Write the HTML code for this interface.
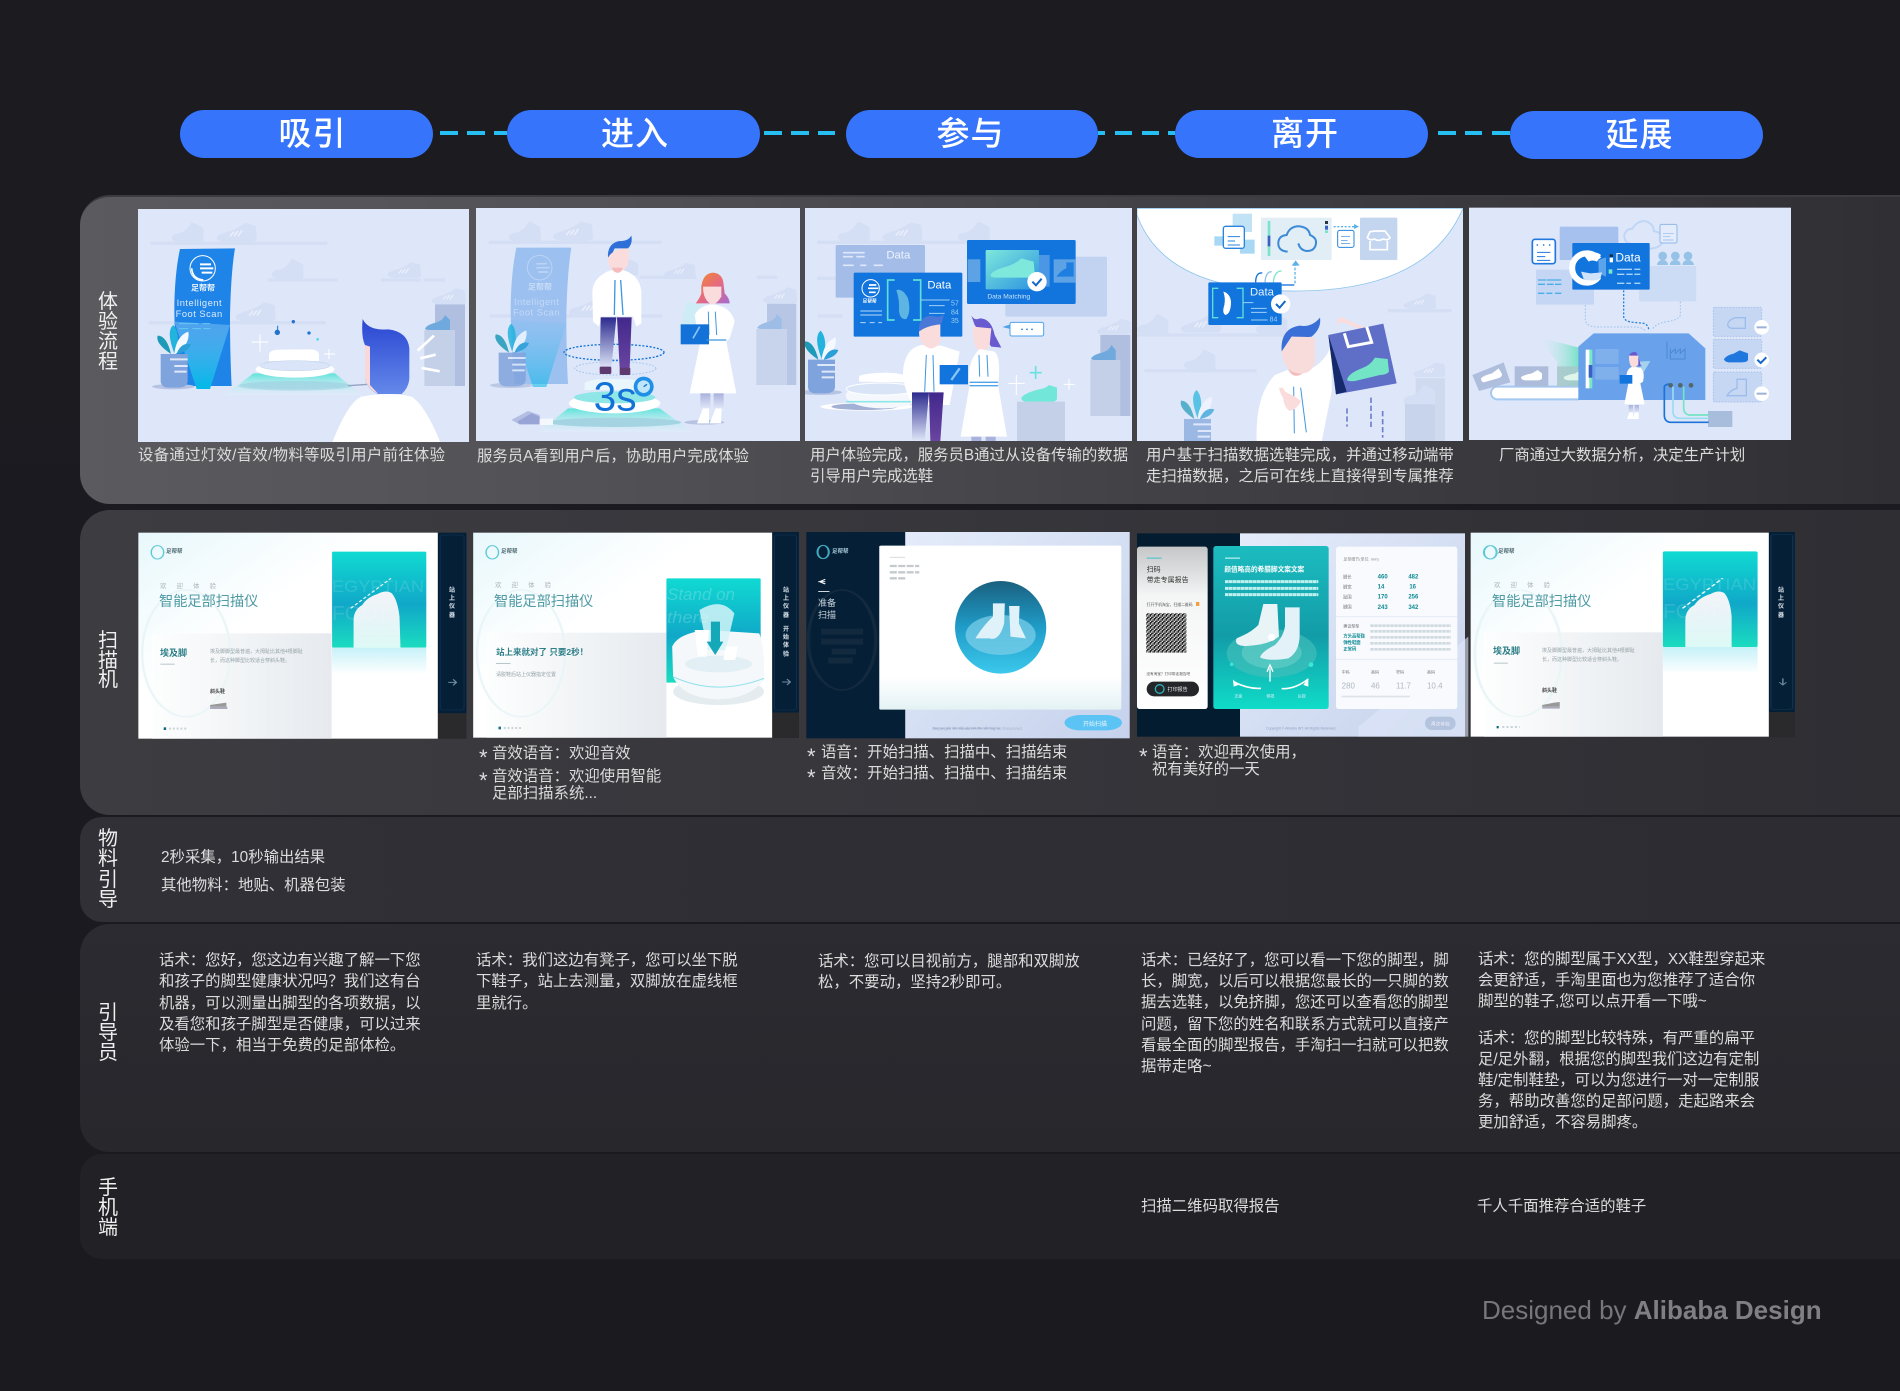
<!DOCTYPE html>
<html lang="zh"><head><meta charset="utf-8"><title>体验流程</title>
<style>
html,body{margin:0;padding:0;background:#1a1a1f}
body{position:relative;width:1900px;height:1391px;overflow:hidden;font-family:"Liberation Sans","Noto Sans CJK SC",sans-serif;background:linear-gradient(180deg,#1b1b20 0,#1a1a1f 100%)}
.r{position:absolute;left:80px;right:0;border-radius:30px 0 0 30px}
.t{position:absolute;white-space:nowrap;font-size:15.4px;line-height:21px;height:21px;color:#dcdcdc}
.s{position:absolute;font-size:22px;line-height:21px;color:#dcdcdc}
.l{position:absolute;left:96px;width:24px;text-align:center;font-size:20px;line-height:20px;color:#f0f0f0;height:20px}
.pill{position:absolute;height:48px;border-radius:24px;background:#3574fb;color:#fff;text-align:center;font-size:33px;line-height:47px;font-weight:500;letter-spacing:1px;box-sizing:border-box}
.d{position:absolute;height:4px;top:131px;background:#26bdf0}
svg.art{position:absolute;left:0;top:0}
</style></head><body>

<div class="r" style="top:195px;height:309px;background:linear-gradient(90deg,#5b5b5f 0,#515155 30%,#3f3f43 65%,#303034 100%);border-top:2px solid #3c3c40;box-sizing:border-box"></div>
<div class="r" style="top:510px;height:305px;background:linear-gradient(90deg,#3c3c41 0,#37373c 40%,#2e2e33 100%)"></div>
<div class="r" style="top:817px;height:105px;border-radius:22px 0 0 22px;background:linear-gradient(90deg,#303036 0,#2c2c32 100%)"></div>
<div class="r" style="top:924px;height:228px;background:linear-gradient(180deg,#2b2b31 0,#27272c 100%)"></div>
<div class="r" style="top:1154px;height:105px;border-radius:22px 0 0 22px;background:#212126"></div>

<div class="pill" style="left:180px;top:110px;width:253px;padding-left:12px">吸引</div>
<div class="pill" style="left:507px;top:110px;width:253px;padding-left:3px">进入</div>
<div class="pill" style="left:846px;top:110px;width:252px;padding-right:3px">参与</div>
<div class="pill" style="left:1175px;top:110px;width:253px;padding-left:7px">离开</div>
<div class="pill" style="left:1510px;top:111px;width:253px;padding-left:6px">延展</div>

<div class="d" style="left:440px;width:18px"></div><div class="d" style="left:467px;width:18px"></div><div class="d" style="left:494px;width:13px"></div>
<div class="d" style="left:764px;width:18px"></div><div class="d" style="left:791px;width:18px"></div><div class="d" style="left:818px;width:17px"></div>
<div class="d" style="left:1098px;width:7px"></div><div class="d" style="left:1115px;width:17px"></div><div class="d" style="left:1142px;width:17px"></div><div class="d" style="left:1168px;width:7px"></div>
<div class="d" style="left:1438px;width:18px"></div><div class="d" style="left:1465px;width:17px"></div><div class="d" style="left:1492px;width:18px"></div>

<svg class="art" width="1900" height="1391" viewBox="0 0 1900 1391" xmlns="http://www.w3.org/2000/svg" font-family="'Liberation Sans','Noto Sans CJK SC',sans-serif">
<defs>
<linearGradient id="beam" x1="0" y1="0" x2="0" y2="1"><stop offset="0" stop-color="#5fe3da"/><stop offset="1" stop-color="#dff3fa" stop-opacity=".2"/></linearGradient>
<linearGradient id="cone" x1="0" y1="0" x2="0" y2="1"><stop offset="0" stop-color="#7fc0f2" stop-opacity=".5"/><stop offset="1" stop-color="#00b8e8"/></linearGradient>
<linearGradient id="hairB" x1="0" y1="0" x2="0" y2="1"><stop offset="0" stop-color="#2a46d2"/><stop offset="1" stop-color="#6488ea"/></linearGradient>
<linearGradient id="pL" x1="0" y1="0" x2="0" y2="1"><stop offset="0" stop-color="#2b2a8e"/><stop offset="1" stop-color="#dfe6f8"/></linearGradient>
<linearGradient id="pR" x1="0" y1="0" x2="0" y2="1"><stop offset="0" stop-color="#41288c"/><stop offset="1" stop-color="#6a44a0"/></linearGradient>
<linearGradient id="hairW" x1="0" y1="0" x2="1" y2="1"><stop offset="0" stop-color="#f08a2c"/><stop offset=".5" stop-color="#e86a7c"/><stop offset="1" stop-color="#a56ad0"/></linearGradient>
<linearGradient id="leg" x1="0" y1="0" x2="0" y2="1"><stop offset="0" stop-color="#a9b2dc"/><stop offset="1" stop-color="#e6ebfa"/></linearGradient>
<linearGradient id="teal" x1="0" y1="0" x2="0" y2="1"><stop offset="0" stop-color="#10dad2"/><stop offset=".55" stop-color="#10a8c8"/><stop offset="1" stop-color="#1adcc0"/></linearGradient>
<linearGradient id="tealc" x1="0" y1="0" x2="0" y2="1"><stop offset="0" stop-color="#1cbcc0"/><stop offset=".55" stop-color="#129ca8"/><stop offset="1" stop-color="#10dcc8"/></linearGradient>
<linearGradient id="fade" x1="0" y1="0" x2="0" y2="1"><stop offset="0" stop-color="#c6f1f8"/><stop offset="1" stop-color="#fff"/></linearGradient>
<linearGradient id="pageW" x1="0" y1="0" x2="1" y2="1"><stop offset="0" stop-color="#e8f8fc"/><stop offset=".4" stop-color="#fff"/><stop offset="1" stop-color="#fff"/></linearGradient>
<linearGradient id="grayP" x1="0" y1="0" x2="1" y2="0"><stop offset="0" stop-color="#fdfefe"/><stop offset="1" stop-color="#e6eaee"/></linearGradient>
<linearGradient id="footG" x1="0" y1="0" x2="0" y2="1"><stop offset="0" stop-color="#f2f4f8"/><stop offset="1" stop-color="#fff" stop-opacity=".85"/></linearGradient>
<linearGradient id="circ" x1="0" y1="0" x2="0" y2="1"><stop offset="0" stop-color="#1a607f"/><stop offset=".5" stop-color="#1f9cc8"/><stop offset="1" stop-color="#3cc8ec"/></linearGradient>
<linearGradient id="scr3" x1="0" y1="0" x2="1" y2="1"><stop offset="0" stop-color="#e4ecfa"/><stop offset="1" stop-color="#c6d2ec"/></linearGradient>
<linearGradient id="qrc" x1="0" y1="0" x2="0" y2="1"><stop offset="0" stop-color="#c4c6c8"/><stop offset=".3" stop-color="#f4f5f5"/><stop offset="1" stop-color="#fff"/></linearGradient>
<linearGradient id="green" x1="1" y1="0" x2="0" y2="0"><stop offset="0" stop-color="#78e2c8"/><stop offset="1" stop-color="#dfe8f9" stop-opacity="0"/></linearGradient>
<linearGradient id="shoeT" x1="0" y1="0" x2="1" y2="1"><stop offset="0" stop-color="#7ee8dc"/><stop offset="1" stop-color="#2a92e0"/></linearGradient>
<linearGradient id="cardB" x1="0" y1="0" x2="0" y2="1"><stop offset="0" stop-color="#fff"/><stop offset=".8" stop-color="#fff"/><stop offset="1" stop-color="#e4f2f4"/></linearGradient>
<pattern id="qr" width="12" height="12" patternUnits="userSpaceOnUse"><rect width="12" height="12" fill="#e8e8e8"/><rect width="4" height="4" fill="#333"/><rect x="8" width="4" height="8" fill="#222"/><rect x="4" y="4" width="4" height="4" fill="#444"/><rect y="8" width="8" height="4" fill="#333"/></pattern>
<g id="boot"><path d="M0 48Q2 36 25 34Q45 28 60 2Q75 6 95 20L95 60L15 60Q0 58 0 48Z"/></g>
<g id="sneak"><path d="M0 45Q5 35 35 28Q65 18 85 2L117 10L120 50Q119 58 105 58L20 58Q0 56 0 45Z"/><path d="M40 42L52 28M52 42L64 26M64 42L76 24" stroke="#e8eefb" stroke-width="5" fill="none"/></g>
<g id="plant">
<ellipse cx="115" cy="545" rx="64" ry="8" fill="#b6c3e3"/>
<path d="M77 447L158 447L158 530Q155 548 130 548L100 548Q80 548 77 530Z" fill="#7fa3dc"/>
<path d="M105 463H158M118 483H158M118 500H155" stroke="#dfe8f9" stroke-width="6"/>
<path d="M108 447Q60 415 68 392Q95 392 108 447Z" fill="#1d9ab8"/>
<path d="M118 445Q92 378 115 360Q136 382 125 445Z" fill="#22b4dd"/>
<path d="M118 445Q125 392 160 380Q166 412 130 445Z" fill="#f4f8ff"/>
<path d="M125 445Q140 410 168 418Q160 440 125 447Z" fill="#2a9fd8"/>
</g>
<clipPath id="c1"><rect x="9" y="12" width="993" height="699"/></clipPath>
<clipPath id="c2"><rect x="9" y="9" width="972" height="699"/></clipPath>
<clipPath id="c3"><rect x="6" y="9" width="981" height="699"/></clipPath>
<clipPath id="c4"><rect x="6" y="9" width="978" height="699"/></clipPath>
</defs>

<!-- I1 -->
<g transform="translate(135 205) scale(.33333)">
<rect x="9" y="12" width="993" height="699" fill="#dee7f9"/>
<g clip-path="url(#c1)" fill="#d4def4">
<rect x="47" y="110" width="530" height="10"/><use href="#boot" transform="translate(110 50)"/><use href="#sneak" transform="translate(245 52)"/>
<rect x="398" y="220" width="210" height="10"/><use href="#boot" transform="translate(410 160)"/>
<rect x="738" y="220" width="120" height="10"/><rect x="866" y="220" width="64" height="10"/><use href="#sneak" transform="translate(758 170) scale(.83)"/>
<rect x="42" y="348" width="530" height="10"/><use href="#sneak" transform="translate(302 290)"/>
<use href="#sneak" transform="translate(890 248) scale(.85)"/>
<rect x="900" y="298" width="90" height="245" fill="#b0bfe0"/><rect x="868" y="375" width="92" height="168" fill="#c4d0e8"/>
<path d="M870 370Q878 358 905 352Q925 345 930 330L945 345V375H885Q870 375 870 370Z" fill="#6fa9dd"/>
<path d="M135 132L300 130Q288 200 285 330Q285 450 290 543H130Q118 400 118 300Q120 200 135 132Z" fill="#1f84e8"/>
<path d="M118 350L285 360L225 552H185Z" fill="url(#cone)"/>
<circle cx="203" cy="190" r="38" fill="none" stroke="#fff" stroke-width="3"/>
<path d="M195 178H228M195 190H235M200 203H232" stroke="#fff" stroke-width="6" fill="none"/>
<path d="M170 190Q172 222 205 225" stroke="#fff" stroke-width="5" fill="none"/>
<text x="168" y="257" font-size="24" font-weight="700" fill="#e9f3ff">足帮帮</text>
<text x="125" y="303" font-size="28" fill="#dcebfb" letter-spacing="1.5">Intelligent</text>
<text x="122" y="336" font-size="28" fill="#dcebfb" letter-spacing="1.5">Foot Scan</text>
<path d="M132 356H190M202 356H226M132 371H160M172 371H198M205 371H226" stroke="#66c8f2" stroke-width="3"/>
<use href="#plant"/>
<ellipse cx="480" cy="543" rx="170" ry="14" fill="#a9cfe4"/>
<path d="M355 505L600 505L680 570L270 570Z" fill="url(#beam)"/>
<ellipse cx="480" cy="540" rx="165" ry="12" fill="#a4d4e2" opacity=".7"/>
<path d="M402 468V450Q402 436 430 434L530 433Q552 436 552 450V468Z" fill="#fff"/>
<ellipse cx="480" cy="493" rx="118" ry="25" fill="#fff"/><ellipse cx="480" cy="482" rx="105" ry="15" fill="#dbe5f9" stroke="#c5d5ec" stroke-width="2"/>
<path d="M640 542L700 538" stroke="#94a2c4" stroke-width="4"/>
<path d="M375 388V440M350 411H400M582 432V462M567 447H600" stroke="#fff" stroke-width="3"/>
<path d="M428 362V380" stroke="#1f72cf" stroke-width="3"/><circle cx="427" cy="382" r="8" fill="#1f72cf"/><circle cx="475" cy="350" r="5" fill="#1f72cf"/><circle cx="522" cy="384" r="5" fill="#1f72cf"/>
<circle cx="548" cy="403" r="4" fill="#4fd8e8"/>
<path d="M683 342Q678 395 690 420V520Q695 550 728 567H800Q825 545 823 510V430Q818 380 760 373Q700 378 683 342Z" fill="url(#hairB)"/>
<path d="M690 420L705 425V540L730 567Q695 550 690 520Z" fill="#f8d8d8"/>
<path d="M592 712Q640 590 680 575Q760 560 830 575Q870 600 916 712Z" fill="#fff"/>
<path d="M848 437L897 392M856 460L902 449M860 489L914 499" stroke="#fff" stroke-width="8"/>
</g></g>

<!-- I2 -->
<g transform="translate(473 205) scale(.33333)">
<rect x="9" y="9" width="972" height="699" fill="#dee7f9"/>
<g clip-path="url(#c2)" fill="#d4def4">
<rect x="47" y="107" width="518" height="10"/><use href="#boot" transform="translate(108 48)"/><use href="#sneak" transform="translate(240 48)"/>
<rect x="500" y="212" width="170" height="10"/><use href="#sneak" transform="translate(572 172) scale(.8)"/><rect x="852" y="212" width="60" height="10"/>
<rect x="50" y="328" width="518" height="10"/><use href="#sneak" transform="translate(287 275)"/>
<use href="#boot" transform="translate(415 160) scale(.85)"/>
<use href="#sneak" transform="translate(870 245) scale(.85)"/>
<rect x="882" y="296" width="88" height="244" fill="#b8c6e5"/><rect x="850" y="372" width="92" height="168" fill="#c8d4eb"/>
<path d="M853 367Q861 356 888 350Q908 343 912 327L926 342V372H868Q853 372 853 367Z" fill="#9dbce6"/>
<path d="M130 128L295 128Q283 200 280 330Q280 450 285 537H125Q113 400 113 300Q115 200 130 128Z" fill="#9cc0f0"/>
<path d="M113 345L280 355L220 546H180Z" fill="url(#cone)" opacity=".55"/>
<circle cx="200" cy="188" r="37" fill="none" stroke="#bcd4f4" stroke-width="3"/>
<path d="M190 176H222M190 188H230M196 201H226" stroke="#bcd4f4" stroke-width="5" fill="none"/>
<text x="165" y="254" font-size="24" font-weight="700" fill="#c8dcf6">足帮帮</text>
<text x="123" y="300" font-size="28" fill="#c4d9f6" letter-spacing="1.5">Intelligent</text>
<text x="120" y="332" font-size="28" fill="#c4d9f6" letter-spacing="1.5">Foot Scan</text>
<use href="#plant" transform="translate(0 -4)" opacity=".85"/>
<path d="M285 610L560 610L660 682L195 682Z" fill="url(#beam)"/>
<ellipse cx="425" cy="652" rx="200" ry="14" fill="#a4d4e2"/>
<path d="M335 555V535Q340 522 425 522Q505 522 510 535V555Z" fill="#e9f6fb"/>
<ellipse cx="425" cy="595" rx="137" ry="30" fill="#fff"/><ellipse cx="425" cy="577" rx="122" ry="18" fill="#8fe6e6"/>
<ellipse cx="423" cy="442" rx="150" ry="24" fill="none" stroke="#1372d8" stroke-width="4" stroke-dasharray="6 5"/>
<ellipse cx="427" cy="490" rx="122" ry="20" fill="none" stroke="#a1c6ee" stroke-width="3" stroke-dasharray="5 5"/>
<path d="M358 260Q360 215 415 195L450 195Q500 210 505 260V355L490 365L480 335H385L378 365L360 350Z" fill="#fff"/>
<path d="M426 225L424 330M443 225L450 330" stroke="#3e97df" stroke-width="4"/>
<path d="M383 337H430L415 490H380Z" fill="url(#pL)"/><path d="M432 337H476L470 490H440Z" fill="url(#pR)"/>
<rect x="380" y="485" width="35" height="22" rx="4" fill="#5e3a70"/><rect x="440" y="488" width="32" height="22" rx="4" fill="#5e3a70"/>
<path d="M405 158Q402 115 440 108Q465 110 475 92Q480 115 465 130H425L412 158Z" fill="#2f6fd8"/>
<path d="M405 158Q420 130 467 130V172Q460 198 435 200Q405 195 405 165Z" fill="#fbdcdc"/>
<path d="M418 195Q435 212 448 195V188H418Z" fill="#f4bcbc"/>
<path d="M685 245Q690 205 720 203Q750 205 752 240L755 265Q770 280 770 295H668Q680 280 685 265Z" fill="url(#hairW)"/>
<path d="M690 245H745V275Q730 300 715 298Q690 285 690 245Z" fill="#fbdcdc"/>
<path d="M640 290L690 300L680 400L625 360Z" fill="#c8eef4" opacity=".7"/>
<path d="M665 330Q680 300 720 298Q775 305 785 350L770 400L760 410L790 565H650L680 420Z" fill="#fff"/>
<path d="M706 320L708 390M727 320L731 390" stroke="#3e97df" stroke-width="3"/>
<rect x="623" y="358" width="85" height="60" fill="#1372d8"/><path d="M660 400L680 365" stroke="#8ac4f4" stroke-width="5"/>
<path d="M700 405H760" stroke="#3e97df" stroke-width="4"/>
<ellipse cx="694" cy="652" rx="60" ry="7" fill="#b6c3e3"/>
<rect x="682" y="565" width="30" height="50" fill="url(#leg)"/><rect x="722" y="565" width="30" height="50" fill="url(#leg)"/>
<path d="M690 610H708V655H672Z M728 610H746L744 655H710Z" fill="#fff"/>
<path d="M115 645L165 618L200 630V655L140 658Z" fill="#b4bde2"/><path d="M133 650L175 625L200 635V658H140Z" fill="#98a4d6"/>
<path d="M200 642L240 640V660H200Z" fill="#f4f8fd"/>
<text x="362" y="617" font-size="122" fill="#1372d8" font-weight="400">3s</text>
<circle cx="512" cy="545" r="30" fill="#1f8fe8"/><circle cx="512" cy="545" r="19" fill="#bfe6f8"/><path d="M512 545L522 538" stroke="#1372d8" stroke-width="4"/>
</g></g>

<!-- I3 -->
<g transform="translate(803 205) scale(.33333)">
<rect x="6" y="9" width="981" height="699" fill="#dee7f9"/>
<g clip-path="url(#c3)" fill="#d4def4">
<rect x="42" y="107" width="450" height="10"/><use href="#boot" transform="translate(105 48)"/><use href="#sneak" transform="translate(238 50)"/><use href="#boot" transform="translate(465 48)"/>
<rect x="44" y="328" width="75" height="10"/><rect x="42" y="215" width="110" height="10"/>
<rect x="607" y="155" width="305" height="180" rx="6" fill="#c2d3f1"/>
<rect x="98" y="120" width="268" height="158" rx="4" fill="#a4bde8"/>
<path d="M120 143H185M120 155H150M160 155H185M120 181H152M172 181H190M212 181H240" stroke="#dfe8fb" stroke-width="5"/>
<text x="250" y="160" font-size="34" fill="#eef3fd">Data</text>
<rect x="152" y="203" width="326" height="192" rx="4" fill="#1274dd"/>
<circle cx="203" cy="250" r="26" fill="none" stroke="#fff" stroke-width="3"/><path d="M198 240H220M195 250H226M198 262H218" stroke="#fff" stroke-width="5"/>
<text x="179" y="293" font-size="14" font-weight="700" fill="#fff">足帮帮</text>
<path d="M172 318H237M172 330H237M172 353H188M200 353H215M226 353H237" stroke="#b9d8f8" stroke-width="3"/>
<path d="M275 225H254V345H275M330 225H353V345H330" fill="none" stroke="#5ee0d8" stroke-width="5"/>
<path d="M280 255Q300 250 315 280Q325 320 310 342Q290 345 288 315Q290 285 280 255Z" fill="#5fb5e2"/>
<path d="M353 285H440M378 302H425M378 325H425" stroke="#9fd0f4" stroke-width="3"/>
<text x="373" y="251" font-size="34" fill="#fff">Data</text>
<text x="444" y="301" font-size="21" fill="#9ed0f6">57</text><text x="444" y="328" font-size="21" fill="#9ed0f6">84</text><text x="444" y="354" font-size="21" fill="#9ed0f6">35</text>
<rect x="492" y="105" width="326" height="192" rx="4" fill="#1274dd"/>
<rect x="494" y="163" width="38" height="68" fill="#5ea2e6"/><rect x="752" y="163" width="66" height="70" fill="#5ea2e6"/>
<rect x="706" y="150" width="34" height="95" fill="#4b97e6"/>
<rect x="548" y="135" width="160" height="118" rx="3" fill="url(#shoeT)"/>
<path d="M562 210Q570 195 610 185Q640 175 655 160L692 170L695 205Q692 218 670 218H580Q562 218 562 210Z" fill="#7ee8dc"/>
<path d="M760 215Q775 195 790 190V172H812V215Z" fill="#1f7fe0"/>
<circle cx="702" cy="230" r="29" fill="#fff"/><path d="M688 230L699 241L716 221" fill="none" stroke="#1467c8" stroke-width="6"/>
<text x="553" y="281" font-size="20" fill="#c6e6fa">Data Matching</text>
<use href="#sneak" transform="translate(882 340) scale(.85)"/>
<rect x="892" y="390" width="90" height="243" fill="#b0bfe0"/><rect x="862" y="465" width="90" height="168" fill="#c4d0e8"/>
<path d="M864 460Q872 448 900 442Q920 435 925 420L938 435V465H880Q864 465 864 460Z" fill="#6fa9dd"/>
<use href="#plant" transform="translate(-62 17)"/>
<ellipse cx="190" cy="605" rx="138" ry="12" fill="#fff"/><ellipse cx="185" cy="605" rx="100" ry="10" fill="#a3b0d6"/>
<path d="M168 530V515Q175 505 250 503Q310 505 320 520V532Z" fill="#fff"/>
<ellipse cx="240" cy="572" rx="112" ry="38" fill="#f4f8fd"/><ellipse cx="235" cy="552" rx="105" ry="18" fill="#d9e4f7" stroke="#fff" stroke-width="3"/>
<path d="M130 590H340" stroke="#8de6e8" stroke-width="5"/>
<rect x="642" y="590" width="144" height="118" fill="#c4d0e8"/>
<path d="M655 578Q665 565 700 555Q730 550 738 540L762 548V582Q760 590 745 590H670Q655 590 655 578Z" fill="#72e6d8"/>
<path d="M698 483V522M680 503H716" stroke="#6ae0e0" stroke-width="5"/><path d="M640 510V570M616 535H665M798 522V555M782 538H815" stroke="#fff" stroke-width="3"/>
<path d="M300 500Q305 430 355 420L415 422L470 440L440 600H330Q300 550 300 500Z" fill="#fff"/>
<path d="M370 450L365 560M390 450L393 560" stroke="#3e97df" stroke-width="3"/>
<path d="M327 562H378L365 708H327Z" fill="url(#pL)"/><path d="M378 562H422L412 708H382Z" fill="url(#pR)"/>
<path d="M348 380Q345 335 385 332Q410 340 422 328Q420 350 412 358Q370 362 348 380Z" fill="#4a78d8"/>
<path d="M348 380Q370 362 412 358V410Q400 432 380 430Q348 420 348 380Z" fill="#fbdcdc"/>
<path d="M505 332Q515 348 530 340Q565 340 575 390L595 428L565 425L515 360Z" fill="#6a5ad0"/>
<path d="M510 365L565 370L560 420Q545 445 530 440Q508 425 510 365Z" fill="#fbdcdc"/>
<path d="M500 540Q490 470 530 432L575 440Q595 460 585 540L612 695H473Z" fill="#fff"/>
<path d="M528 450L530 515M552 450L555 515" stroke="#3e97df" stroke-width="3"/><path d="M500 532H585M500 542H585" stroke="#4fa3e8" stroke-width="4"/>
<rect x="410" y="480" width="85" height="58" fill="#1274dd"/><path d="M445 525L470 490" stroke="#8ac4f4" stroke-width="7"/>
<rect x="505" y="695" width="30" height="14" fill="#a9b2dc"/><rect x="548" y="695" width="30" height="14" fill="#a9b2dc"/>
<path d="M598 366L622 358V372Z" fill="#4da3ec"/><rect x="621" y="352" width="101" height="41" rx="5" fill="#fff" stroke="#4da3ec" stroke-width="3"/>
<circle cx="657" cy="373" r="2.5" fill="#1274dd"/><circle cx="672" cy="373" r="2.5" fill="#1274dd"/><circle cx="687" cy="373" r="2.5" fill="#1274dd"/>
</g></g>

<!-- I4 -->
<g transform="translate(1135 205) scale(.33333)">
<rect x="6" y="9" width="978" height="699" fill="#dee7f9"/>
<g clip-path="url(#c4)" fill="#d4def4">
<path d="M6 30Q90 262 490 258Q880 255 984 10H6Z" fill="#fff" stroke="#8cc4ec" stroke-width="2.5"/>
<rect x="293" y="26" width="58" height="55" fill="#c2e2f6"/><rect x="238" y="94" width="30" height="28" fill="#a8d8f4"/><rect x="315" y="104" width="44" height="42" fill="#a8d8f4"/>
<rect x="265" y="64" width="63" height="66" rx="7" fill="#fff" stroke="#2a84dd" stroke-width="4"/>
<path d="M278 95H315M278 108H300M278 120H315" stroke="#2a84dd" stroke-width="3"/>
<rect x="378" y="38" width="212" height="127" fill="#e2eef6"/>
<rect x="398" y="48" width="8" height="105" fill="#7ae4ca"/><rect x="398" y="92" width="8" height="32" fill="#3a5fc6"/>
<rect x="570" y="48" width="9" height="9" fill="#2b3342"/><rect x="570" y="62" width="9" height="12" fill="#3a5fc6"/><rect x="570" y="76" width="9" height="8" fill="#7ae4ca"/>
<path d="M458 140Q428 138 430 112Q432 92 455 90Q465 62 495 64Q522 68 525 90Q545 98 543 115Q540 138 515 138Q495 135 490 115" fill="none" stroke="#3a8ad8" stroke-width="6"/>
<path d="M596 65H665" stroke="#5bb2ea" stroke-width="4" stroke-dasharray="6 5"/><path d="M657 57L672 65L657 72Z" fill="#5bb2ea"/>
<rect x="608" y="76" width="49" height="51" rx="6" fill="#fff" stroke="#2a84dd" stroke-width="3"/><path d="M618 95H645M618 106H638M618 116H645" stroke="#2a84dd" stroke-width="2"/>
<rect x="675" y="38" width="112" height="127" rx="3" fill="#c4d5ef"/>
<path d="M705 80L720 78H750L765 98Q760 108 745 102Q730 110 718 102Q705 108 697 98ZM705 108V134H757V108" fill="none" stroke="#fff" stroke-width="5"/>
<path d="M480 235V175" stroke="#5bb2ea" stroke-width="4" stroke-dasharray="8 5"/><path d="M470 182L482 166L494 182Z" fill="#5bb2ea"/>
<path d="M440 240H478" stroke="#1274dd" stroke-width="4"/>
<path d="M362 232Q362 202 382 204" fill="none" stroke="#1274dd" stroke-width="4"/><path d="M390 232Q392 200 410 200" fill="none" stroke="#8dc2ec" stroke-width="4"/><path d="M415 232Q418 198 440 198" fill="none" stroke="#7ae4ca" stroke-width="4"/>
<rect x="8" y="385" width="500" height="10"/><use href="#boot" transform="translate(5 325)"/><use href="#sneak" transform="translate(138 325)"/><use href="#boot" transform="translate(362 325)"/>
<rect x="28" y="492" width="337" height="10"/><use href="#boot" transform="translate(146 432)"/>
<rect x="758" y="312" width="192" height="10"/><use href="#sneak" transform="translate(805 264) scale(.82)"/>
<use href="#sneak" transform="translate(835 470) scale(.8)"/>
<rect x="842" y="520" width="88" height="190" fill="#cfdaef"/><rect x="810" y="595" width="90" height="115" fill="#c8d4eb"/><use href="#boot" transform="translate(806 538)"/>
<rect x="220" y="232" width="220" height="128" rx="4" fill="#1274dd"/>
<path d="M250 250H233V338H250M305 250H324V338H305" fill="none" stroke="#5ee0d8" stroke-width="4"/>
<path d="M265 260Q285 265 288 290Q288 325 272 330Q260 325 268 300Q272 280 265 260Z" fill="#fff"/>
<path d="M324 293H355M348 310H395M348 322H395M348 345H398" stroke="#9fd0f4" stroke-width="3"/>
<text x="345" y="272" font-size="34" fill="#e6f3fe">Data</text><text x="404" y="349" font-size="21" fill="#9ed0f6">84</text>
<circle cx="437" cy="297" r="29" fill="#fff"/><path d="M423 297L434 308L451 288" fill="none" stroke="#1467c8" stroke-width="6"/>
<use href="#plant" transform="translate(70 195)" opacity=".7"/>
<path d="M636 610V665M708 578V672M743 618V698" stroke="#6f7fd0" stroke-width="5" stroke-dasharray="16 8"/>
<path d="M365 710Q360 570 420 510L470 490L530 490Q570 470 590 420V560L560 710Z" fill="#fff"/>
<path d="M476 545L478 685M497 548L514 682" stroke="#3e97df" stroke-width="3"/>
<path d="M460 495Q480 530 515 495V470H460Z" fill="#f4bcbc"/>
<path d="M432 548Q445 545 450 560L480 575L498 588Q485 615 462 618Q445 600 445 580Q435 565 432 548Z" fill="#fbdcdc"/>
<path d="M603 358L615 335L690 368L680 375L625 352Z" fill="#fbdcdc"/>
<path d="M580 390L745 356L785 535L603 568Z" fill="#5f6fc8"/><path d="M580 390L603 568L635 560Z" fill="#142a6a"/>
<path d="M628 385L640 425L710 412L695 365" fill="none" stroke="#fff" stroke-width="9"/>
<path d="M636 525Q640 505 680 490Q705 482 720 458L758 462L762 500Q755 510 735 510L660 528Q640 530 636 525Z" fill="#74e4c6"/>
<path d="M440 440Q435 370 495 362Q530 368 555 338Q560 370 530 395Q500 400 470 395L440 440Z" fill="#3a6fd8"/>
<path d="M440 440L470 395Q515 395 540 398V470Q530 510 490 505Q445 500 440 440Z" fill="#f8dcdc"/>
</g></g>

<!-- I5 -->
<g transform="translate(1467 205) scale(.33333)">
<rect x="6" y="8" width="966" height="697" fill="#dee7f9"/>
<rect x="278" y="65" width="176" height="100" rx="5" fill="#a7c1ee"/>
<path d="M505 118Q470 118 472 90Q478 70 495 72Q515 42 540 50Q562 60 560 78Q595 85 588 112Q570 135 540 130" fill="none" stroke="#c0d6f4" stroke-width="6"/>
<rect x="579" y="58" width="51" height="56" rx="5" fill="#e4ecfb" stroke="#8fb8ea" stroke-width="3"/><path d="M588 85H620M588 95H610M588 105H620" stroke="#8fb8ea" stroke-width="2"/>
<rect x="196" y="103" width="69" height="73" rx="8" fill="#fff" stroke="#2077dd" stroke-width="5"/>
<path d="M210 142H250M210 155H235M210 166H250" stroke="#2077dd" stroke-width="3"/><circle cx="211" cy="120" r="2.5" fill="#2077dd"/><circle cx="230" cy="120" r="2.5" fill="#2077dd"/><circle cx="248" cy="120" r="2.5" fill="#2077dd"/>
<rect x="207" y="194" width="174" height="105" rx="5" fill="#c4d6f3"/>
<path d="M213 225H238M240 225H283M213 238H234M240 238H260M264 238H283M213 265H232M238 265H256M264 265H283" stroke="#48aee8" stroke-width="4"/>
<rect x="516" y="183" width="172" height="106" rx="5" fill="#ccdcf5"/>
<g fill="#95c2e6"><circle cx="587" cy="153" r="13"/><circle cx="625" cy="153" r="13"/><circle cx="663" cy="153" r="13"/><path d="M570 180Q572 165 587 165Q602 165 603 180ZM608 180Q610 165 625 165Q640 165 641 180ZM646 180Q648 165 663 165Q678 165 681 180Z"/></g>
<rect x="316" y="114" width="232" height="140" rx="3" fill="#1274dd"/>
<path d="M395 163A44 44 0 1 0 395 215" fill="none" stroke="#fff" stroke-width="18"/>
<path d="M350 150Q385 135 402 150L390 170Q375 163 365 170Z" fill="#fff"/><path d="M394 165L417 157V215L395 205Z" fill="#5ba4ec"/><path d="M342 200L370 205L405 202L400 222Q375 232 350 222Z" fill="#cfe2fa"/>
<rect x="428" y="148" width="10" height="8" fill="#222b3c"/><rect x="428" y="158" width="10" height="14" fill="#fff"/><rect x="425" y="193" width="11" height="13" fill="#78e6c8"/>
<text x="445" y="170" font-size="36" fill="#fff">Data</text>
<path d="M450 193H495M502 193H520M450 208H472M478 208H497M502 208H520M450 235H472M478 235H492M502 235H520" stroke="#a6d3f6" stroke-width="4"/>
<path d="M470 256V335Q472 350 500 352L530 355Q545 360 545 375" fill="none" stroke="#2a84dd" stroke-width="4" stroke-dasharray="6 5"/>
<path d="M355 300V345Q358 365 390 366L500 366Q530 366 535 380" fill="none" stroke="#9cc0ee" stroke-width="3" stroke-dasharray="5 5"/>
<path d="M640 290V330Q635 345 600 350Q565 355 555 375" fill="none" stroke="#9cc0ee" stroke-width="3" stroke-dasharray="5 5"/>
<path d="M210 395L335 428V545H270V470Z" fill="url(#green)"/>
<rect x="72" y="545" width="280" height="38" rx="19" fill="#fff" stroke="#a4c8f0" stroke-width="6"/>
<path d="M16 510L110 472L130 532L36 558Z" fill="#b0bedd"/><path d="M42 520Q52 510 75 505L95 490L105 507Q105 518 92 520L50 532Q42 530 42 520Z" fill="#fff"/>
<rect x="143" y="484" width="101" height="60" fill="#adbcdb"/><path d="M162 516Q175 508 195 505L212 495L225 505V520Q222 526 210 526H175Q162 525 162 516Z" fill="#fff"/>
<rect x="270" y="484" width="68" height="60" fill="#a8c5c8" opacity=".8"/><path d="M290 516Q305 508 325 505L338 497V526H305Q290 525 290 516Z" fill="#dff5ea"/>
<path d="M380 385H665L715 430V585H334V425Z" fill="#69a2ea"/>
<rect x="356" y="434" width="12" height="116" fill="#fff"/><rect x="367" y="434" width="9" height="116" fill="#75e6c6"/><rect x="365" y="480" width="11" height="38" fill="#3a5fc6"/>
<rect x="385" y="432" width="70" height="45" rx="4" fill="#80b0ec"/><rect x="385" y="486" width="70" height="38" rx="4" fill="#80b0ec"/>
<path d="M600 410V462M610 430V462H654V432L640 445V432L625 445V432L610 445" fill="none" stroke="#4b88d4" stroke-width="3"/>
<circle cx="611" cy="541" r="7" fill="#566"/><circle cx="640" cy="541" r="7" fill="#566"/><circle cx="672" cy="541" r="7" fill="#566"/>
<rect x="723" y="618" width="73" height="48" fill="#a8bcdc"/>
<path d="M725 652H610Q592 650 592 630V545Q592 540 606 537" fill="none" stroke="#1b72d8" stroke-width="5"/>
<path d="M725 640H635Q618 638 618 620V545" fill="none" stroke="#9adcf0" stroke-width="5"/>
<path d="M725 630H665Q650 625 650 610V545" fill="none" stroke="#72e4c4" stroke-width="5"/>
<path d="M515 470L550 468L525 510Z" fill="#bfe8ee" opacity=".7"/>
<path d="M478 530Q475 490 498 485L520 488Q535 500 528 530L520 535L533 598H472L484 535Z" fill="#fff"/>
<path d="M486 452Q492 438 508 442Q518 462 520 478L525 485L490 475Z" fill="#6a5ad0"/>
<path d="M486 452H514V478Q505 490 495 486Q485 478 486 452Z" fill="#fbdcdc"/>
<rect x="458" y="510" width="38" height="26" fill="#1274dd"/>
<rect x="485" y="600" width="13" height="25" fill="url(#leg)"/><rect x="503" y="600" width="13" height="25" fill="url(#leg)"/>
<path d="M487 622H498V642H480ZM503 622H515V642H497Z" fill="#fff"/>
<g fill="#c6d7f3" stroke="#a8c2ea" stroke-width="3" stroke-dasharray="5 4"><rect x="739" y="307" width="145" height="87" rx="4"/><rect x="739" y="403" width="145" height="87" rx="4"/><rect x="739" y="501" width="145" height="90" rx="4"/></g>
<path d="M782 357Q785 345 805 338L835 338V370H795Q782 368 782 357Z" fill="none" stroke="#9cbdec" stroke-width="4"/>
<path d="M771 462Q780 450 800 446L818 436L843 445V465Q840 472 825 472H785Q771 470 771 462Z" fill="#2077dd"/>
<path d="M780 572Q790 555 810 550V523H838V572Z" fill="none" stroke="#9cbdec" stroke-width="4"/>
<circle cx="884" cy="367" r="22" fill="#fff"/><rect x="869" y="364" width="30" height="6" fill="#9cb2d8"/>
<circle cx="884" cy="465" r="22" fill="#fff"/><path d="M871 464L881 474L898 457" fill="none" stroke="#1467c8" stroke-width="6"/>
<circle cx="884" cy="566" r="22" fill="#fff"/><rect x="869" y="563" width="30" height="6" fill="#9cb2d8"/>
</g>

<!-- S1 -->
<g transform="translate(80 510) scale(.47832 .33333)">
<rect x="748" y="68" width="60" height="542" fill="#051f37"/><rect x="748" y="610" width="60" height="76" fill="#2a2a2d"/>
<rect x="753" y="75" width="50" height="525" rx="6" fill="none" stroke="#0d3150" stroke-width="2"/>
<rect x="122" y="68" width="626" height="618" fill="url(#pageW)"/>
<rect x="150" y="370" width="376" height="316" fill="url(#grayP)"/>
<ellipse cx="222" cy="430" rx="92" ry="190" fill="none" stroke="#eaf5f7" stroke-width="5"/>
<rect x="527" y="125" width="197" height="288" rx="3" fill="url(#teal)"/>
<rect x="527" y="413" width="197" height="80" fill="url(#fade)"/>
<path d="M572 413V330Q572 300 590 285Q600 262 622 252Q640 238 652 250Q664 270 668 320L670 413Z" fill="url(#footG)"/>
<path d="M566 295L650 205" stroke="#e8fafa" stroke-width="3" stroke-dasharray="8 5"/>
<rect x="175" y="652" width="5" height="8" fill="#0b6a7c"/><path d="M186 656H224" stroke="#c8d4d8" stroke-width="6" stroke-dasharray="4 4"/>
<ellipse cx="162" cy="127" rx="13" ry="20" fill="none" stroke="#5ec9d8" stroke-width="3"/>
<rect x="168" y="461" width="30" height="3" fill="#b8c6ca"/>
<path d="M272 590H308V597H272Z" fill="#aab"/><path d="M272 585L295 580L306 578V590H272Z" fill="#999"/>
<path d="M770 517H786M780 508L787 517L780 526" fill="none" stroke="#6d8ea6" stroke-width="3"/>
</g>
<!-- S2 -->
<g transform="translate(80 510) scale(.47832 .33333)">
<rect x="1447" y="66" width="56" height="542" fill="#051f37"/><rect x="1447" y="608" width="56" height="76" fill="#2a2a2d"/>
<rect x="1452" y="75" width="46" height="525" rx="6" fill="none" stroke="#0d3150" stroke-width="2"/>
<rect x="822" y="68" width="625" height="615" fill="url(#pageW)"/>
<rect x="850" y="368" width="376" height="315" fill="url(#grayP)"/>
<ellipse cx="922" cy="430" rx="92" ry="190" fill="none" stroke="#eaf5f7" stroke-width="5"/>
<rect x="1226" y="205" width="197" height="313" rx="3" fill="url(#teal)"/>
<ellipse cx="1335" cy="545" rx="95" ry="40" fill="#e4ecf0"/>
<path d="M1238 410Q1250 370 1310 360L1420 370Q1432 410 1430 510Q1400 565 1335 568Q1260 565 1240 500Z" fill="#f4f8fb"/>
<ellipse cx="1335" cy="462" rx="70" ry="25" fill="#e2eff5"/>
<path d="M1240 500Q1330 560 1430 505" fill="none" stroke="#93e2ec" stroke-width="3"/>
<path d="M1295 300L1312 420H1350L1368 310Q1340 260 1295 300Z" fill="#d4f5f8" opacity=".85"/>
<path d="M1285 360H1315L1310 440L1292 440ZM1350 410L1375 410L1370 450H1345Z" fill="#fff"/>
<path d="M1319 335H1338V395H1345L1328 435L1310 395H1319Z" fill="#14a8b8"/>
<rect x="875" y="650" width="5" height="8" fill="#0b6a7c"/><path d="M886 654H924" stroke="#c8d4d8" stroke-width="6" stroke-dasharray="4 4"/>
<ellipse cx="862" cy="127" rx="13" ry="20" fill="none" stroke="#5ec9d8" stroke-width="3"/>
<rect x="870" y="459" width="30" height="3" fill="#b8c6ca"/>
<path d="M1468 516H1484M1478 507L1485 516L1478 525" fill="none" stroke="#6d8ea6" stroke-width="3"/>
</g>
<!-- S3 -->
<g transform="translate(800 510) scale(.70153 .33333)">
<rect x="9" y="66" width="141" height="619" fill="#051f37"/>
<rect x="150" y="66" width="320" height="619" fill="url(#scr3)"/>
<ellipse cx="60" cy="390" rx="48" ry="150" fill="none" stroke="#12293e" stroke-width="5"/>
<path d="M30 365H90M30 395H90M45 425H80M40 452H75" stroke="#12293e" stroke-width="18"/>
<rect x="113" y="107" width="345" height="492" rx="3" fill="url(#cardB)"/>
<ellipse cx="286" cy="352" rx="65" ry="139" fill="url(#circ)"/>
<ellipse cx="286" cy="375" rx="50" ry="60" fill="#7fd0ea" opacity=".7"/>
<path d="M275 280H292L291 340Q284 395 270 385L250 385Q262 345 275 320ZM298 288H313L312 340L322 385L300 380Z" fill="#dff1f9"/>
<rect x="377" y="615" width="82" height="46" rx="23" fill="#5cc4f4"/>
<path d="M28 215L36 208M28 215L36 222M26 215H36" stroke="#fff" stroke-width="2.5" fill="none"/><rect x="26" y="243" width="16" height="3" fill="#cfd8e0"/>
<ellipse cx="33" cy="126" rx="8" ry="20" fill="none" stroke="#3fa8c0" stroke-width="3"/>
<path d="M128 142H150" stroke="#d5dde2" stroke-width="3"/><path d="M128 168H170M128 187H170M128 205H150" stroke="#c4cace" stroke-width="7" stroke-dasharray="10 2"/>
<path d="M190 655H285" stroke="#aab8d4" stroke-width="5" stroke-dasharray="7 2"/>
</g>
<!-- S4 -->
<g transform="translate(1135 530) scale(.33333)">
<rect x="6" y="10" width="309" height="610" fill="#041c30"/>
<rect x="315" y="10" width="675" height="610" fill="url(#scr3)"/>
<path d="M670 590L1000 320V620H670Z" fill="#dfe7f8" opacity=".6"/>
<rect x="6" y="50" width="212" height="487" rx="8" fill="url(#qrc)"/>
<rect x="35" y="82" width="45" height="5" fill="#78c8cc"/>
<text x="35" y="125" font-size="21" fill="#333">扫码</text><text x="35" y="156" font-size="21" fill="#333">带走专属报告</text>
<text x="35" y="228" font-size="11.5" fill="#555">打开手机淘宝&#xFF0C;扫描二维码</text><rect x="183" y="216" width="10" height="12" fill="#f0a040"/>
<rect x="34" y="250" width="120" height="118" fill="url(#qr)"/>
<text x="34" y="435" font-size="11" fill="#555">没有淘宝&#xFF1F;打印带走报告吧</text>
<rect x="35" y="455" width="157" height="44" rx="22" fill="#24262a"/><circle cx="74" cy="477" r="13" fill="none" stroke="#30b0b8" stroke-width="4"/><text x="98" y="483" font-size="15" fill="#eee">打印报告</text>
<rect x="235" y="48" width="346" height="489" rx="8" fill="url(#tealc)"/>
<rect x="270" y="82" width="45" height="5" fill="#8ee2e0"/>
<text x="268" y="125" font-size="20" font-weight="700" fill="#fff">颜值略高的希腊脚文案文案</text>
<path d="M270 155H550M270 175H550M270 194H550" stroke="#bdf0ee" stroke-width="9" stroke-dasharray="11 1"/>
<ellipse cx="410" cy="370" rx="135" ry="72" fill="#4ac0ba" opacity=".6"/><ellipse cx="410" cy="368" rx="90" ry="48" fill="#69cec8" opacity=".6"/>
<path d="M385 222H427L432 320Q400 345 335 348Q295 348 305 325Q345 310 370 285Z" fill="#e9f4f6"/>
<path d="M450 232H494V310Q495 365 460 385Q400 395 375 382Q380 365 420 345Q445 320 450 290Z" fill="#e3f2f8"/>
<circle cx="410" cy="322" r="11" fill="#fff"/>
<path d="M405 455V415M396 425L405 405L414 425" stroke="#fff" stroke-width="4" fill="none"/>
<path d="M295 455Q340 478 378 475M520 447Q480 478 440 476" stroke="#fff" stroke-width="5" fill="none"/><path d="M294 448L310 465L296 470ZM520 445L505 465L520 470Z" fill="#fff"/>
<circle cx="528" cy="404" r="7" fill="#3ae8d8"/><circle cx="290" cy="403" r="5" fill="#3ae8d8"/>
<text x="298" y="503" font-size="12" fill="#def">正面</text><text x="394" y="503" font-size="12" fill="#def">侧视</text><text x="488" y="503" font-size="12" fill="#def">后视</text>
<rect x="603" y="50" width="364" height="487" rx="8" fill="#f8fafd"/>
<path d="M603 260H967M603 388H967" stroke="#e4ecf6" stroke-width="3"/>
<text x="625" y="92" font-size="12" fill="#888">足型细节(单位: mm)</text>
<g font-size="13" fill="#777"><text x="624" y="146">脚长</text><text x="624" y="176">脚宽</text><text x="624" y="206">趾围</text><text x="624" y="236">脚围</text></g>
<g font-size="18" font-weight="700" fill="#0e8a94"><text x="728" y="146">460</text><text x="820" y="146">482</text><text x="728" y="176">14</text><text x="823" y="176">16</text><text x="728" y="206">170</text><text x="820" y="206">256</text><text x="728" y="237">243</text><text x="820" y="237">342</text></g>
<text x="625" y="293" font-size="12" fill="#666">建议型型</text>
<g font-size="13" font-weight="700" fill="#0e8a94"><text x="625" y="322">方头高帮鞋</text><text x="625" y="342">弹性鞋面</text><text x="625" y="362">正常码</text></g>
<path d="M706 287H948M706 304H948M706 322H948M706 340H948M706 358H948" stroke="#cfd9e0" stroke-width="8" stroke-dasharray="10 2"/>
<g font-size="12" fill="#777"><text x="620" y="431">中码</text><text x="708" y="431">高码</text><text x="783" y="431">窄码</text><text x="876" y="431">高码</text></g>
<g font-size="24" fill="#b0b8c0"><text x="620" y="475">280</text><text x="708" y="475">46</text><text x="783" y="475">11.7</text><text x="876" y="475">10.4</text></g>
<rect x="620" y="497" width="205" height="5" fill="#dde3e8"/>
<text x="393" y="599" font-size="10.5" fill="#8ea0c0">Copyright © Alibaba INT. All Rights Reserved.</text>
<rect x="870" y="560" width="92" height="40" rx="20" fill="#b5c4de"/><text x="888" y="587" font-size="14" fill="#eef">再次体验</text>
</g>
<!-- S5 -->
<g transform="translate(800 510) scale(.70153 .33333)">
<rect x="1381" y="66" width="37" height="540" fill="#051f37"/><rect x="1381" y="606" width="37" height="76" fill="#2a2a2d"/>
<rect x="1384" y="73" width="31" height="525" rx="5" fill="none" stroke="#0d3150" stroke-width="2"/>
<rect x="956" y="68" width="425" height="612" fill="url(#pageW)"/>
<rect x="975" y="367" width="255" height="313" fill="url(#grayP)"/>
<ellipse cx="1024" cy="430" rx="62" ry="190" fill="none" stroke="#eaf5f7" stroke-width="4"/>
<rect x="1230" y="124" width="135" height="287" rx="3" fill="url(#teal)"/>
<rect x="1230" y="411" width="135" height="80" fill="url(#fade)"/>
<path d="M1262 411V330Q1262 300 1275 285Q1282 262 1298 252Q1310 238 1318 250Q1326 270 1328 320V411Z" fill="url(#footG)"/>
<path d="M1258 295L1315 205" stroke="#e8fafa" stroke-width="3" stroke-dasharray="8 5"/>
<rect x="993" y="648" width="3" height="7" fill="#0b6a7c"/><path d="M1001 651H1026" stroke="#c8d4d8" stroke-width="6" stroke-dasharray="3 3"/>
<ellipse cx="984" cy="127" rx="9" ry="20" fill="none" stroke="#5ec9d8" stroke-width="3"/>
<rect x="989" y="458" width="20" height="3" fill="#b8c6ca"/>
<path d="M1058 590H1083V596H1058Z" fill="#aab"/><path d="M1058 585L1075 578L1083 576V590H1058Z" fill="#999"/>
<path d="M1401 505V525M1396 517L1401 525L1406 517" fill="none" stroke="#6d8ea6" stroke-width="2"/>
</g>

<!-- screen texts -->
<g fill="#fff" fill-opacity=".13" font-size="17">
<text x="332" y="592" textLength="92" lengthAdjust="spacingAndGlyphs">EGYPTIAN</text><text x="332" y="620" textLength="58" lengthAdjust="spacingAndGlyphs" font-size="20">FOOT</text>
<text x="1663" y="590" textLength="93" lengthAdjust="spacingAndGlyphs">EGYPTIAN</text><text x="1663" y="618" textLength="58" lengthAdjust="spacingAndGlyphs" font-size="20">FOOT</text>
</g>
<g fill="#fff" fill-opacity=".2" font-size="17" font-style="italic">
<text x="667" y="600" textLength="68" lengthAdjust="spacingAndGlyphs">Stand on</text><text x="667" y="623" textLength="42" lengthAdjust="spacingAndGlyphs">there</text>
</g>
<g fill="#4f9aa4">
<text x="159" y="606" font-size="14.2">智能足部扫描仪</text>
<text x="494" y="606" font-size="14.2">智能足部扫描仪</text>
<text x="1492" y="606" font-size="14.2">智能足部扫描仪</text>
</g>
<g fill="#a8b4b8" font-size="6.5" letter-spacing="10">
<text x="160" y="588">欢迎体验</text><text x="495" y="587">欢迎体验</text><text x="1494" y="587">欢迎体验</text>
</g>
<g fill="#2e7f88" font-weight="700">
<text x="160" y="656" font-size="9">埃及脚</text><text x="496" y="655" font-size="8.5">站上来就对了 只要2秒&#xFF01;</text><text x="1493" y="654" font-size="9">埃及脚</text>
</g>
<g fill="#96a3a8" font-size="5">
<text x="210" y="653">埃及脚脚型最普遍&#xFF0C;大拇趾比其他4根脚趾</text><text x="210" y="662">长&#xFF0C;而这种脚型比较适合穿斜头鞋。</text>
<text x="496" y="676">请脱鞋后站上仪器指定位置</text>
<text x="1542" y="652">埃及脚脚型最普遍&#xFF0C;大拇趾比其他4根脚趾</text><text x="1542" y="661">长&#xFF0C;而这种脚型比较适合穿斜头鞋。</text>
<text x="210" y="693" font-weight="700" fill="#444">斜头鞋</text><text x="1542" y="692" font-weight="700" fill="#444">斜头鞋</text>
</g>
<g fill="#557078" font-size="5.5" font-weight="700"><text x="166" y="553">足帮帮</text><text x="501" y="553">足帮帮</text><text x="1498" y="553">足帮帮</text><text x="832" y="553" fill="#a0c4d0">足帮帮</text></g>
<g fill="#dfe8ee" font-size="6" font-weight="700"><text x="449" y="592">站</text><text x="449" y="600">上</text><text x="449" y="608">仪</text><text x="449" y="617">器</text>
<text x="783" y="592">站</text><text x="783" y="600">上</text><text x="783" y="608">仪</text><text x="783" y="617">器</text><text x="783" y="631">开</text><text x="783" y="639">始</text><text x="783" y="647">体</text><text x="783" y="656">验</text>
<text x="1778" y="592">站</text><text x="1778" y="600">上</text><text x="1778" y="608">仪</text><text x="1778" y="617">器</text></g>
<g fill="#c8d4dc" font-size="9"><text x="818" y="606">准备</text><text x="818" y="618">扫描</text></g>
<text x="1083" y="726" font-size="6" fill="#eaf6fc">开始扫描</text>
<text x="932" y="730" font-size="4.5" fill="#a8b6ce">Copyright © Alibaba INT. All Rights Reserved.</text>
</svg>

<!-- row labels -->
<div class="l" style="top:292px">体</div><div class="l" style="top:312px">验</div><div class="l" style="top:332px">流</div><div class="l" style="top:352px">程</div>
<div class="l" style="top:631px">扫</div><div class="l" style="top:651px">描</div><div class="l" style="top:670px">机</div>
<div class="l" style="top:829px">物</div><div class="l" style="top:849px">料</div><div class="l" style="top:870px">引</div><div class="l" style="top:890px">导</div>
<div class="l" style="top:1003px">引</div><div class="l" style="top:1023px">导</div><div class="l" style="top:1043px">员</div>
<div class="l" style="top:1178px">手</div><div class="l" style="top:1198px">机</div><div class="l" style="top:1218px">端</div>

<!-- row 1 captions -->
<div class="t" style="left:138px;top:445px;letter-spacing:.3px">设备通过灯效/音效/物料等吸引用户前往体验</div>
<div class="t" style="left:477px;top:446px">服务员A看到用户后&#xFF0C;协助用户完成体验</div>
<div class="t" style="left:810px;top:445px">用户体验完成&#xFF0C;服务员B通过从设备传输的数据</div>
<div class="t" style="left:810px;top:466px">引导用户完成选鞋</div>
<div class="t" style="left:1146px;top:445px">用户基于扫描数据选鞋完成&#xFF0C;并通过移动端带</div>
<div class="t" style="left:1146px;top:466px">走扫描数据&#xFF0C;之后可在线上直接得到专属推荐</div>
<div class="t" style="left:1499px;top:445px">厂商通过大数据分析&#xFF0C;决定生产计划</div>

<!-- row 2 captions -->
<div class="s" style="left:479px;top:747px">*</div><div class="t" style="left:492px;top:743px">音效语音&#xFF1A;欢迎音效</div>
<div class="s" style="left:479px;top:770px">*</div><div class="t" style="left:492px;top:766px">音效语音&#xFF1A;欢迎使用智能</div>
<div class="t" style="left:492px;top:783px">足部扫描系统...</div>
<div class="s" style="left:807px;top:746px">*</div><div class="t" style="left:821px;top:742px">语音&#xFF1A;开始扫描、扫描中、扫描结束</div>
<div class="s" style="left:807px;top:767px">*</div><div class="t" style="left:821px;top:763px">音效&#xFF1A;开始扫描、扫描中、扫描结束</div>
<div class="s" style="left:1139px;top:746px">*</div><div class="t" style="left:1152px;top:742px">语音&#xFF1A;欢迎再次使用&#xFF0C;</div>
<div class="t" style="left:1152px;top:759px">祝有美好的一天</div>

<!-- row 3 -->
<div class="t" style="left:161px;top:847px">2秒采集&#xFF0C;10秒输出结果</div>
<div class="t" style="left:161px;top:875px">其他物料&#xFF1A;地贴、机器包装</div>

<!-- row 4 -->
<div class="t" style="left:159px;top:950px">话术&#xFF1A;您好&#xFF0C;您这边有兴趣了解一下您</div>
<div class="t" style="left:159px;top:971px">和孩子的脚型健康状况吗&#xFF1F;我们这有台</div>
<div class="t" style="left:159px;top:993px">机器&#xFF0C;可以测量出脚型的各项数据&#xFF0C;以</div>
<div class="t" style="left:159px;top:1014px">及看您和孩子脚型是否健康&#xFF0C;可以过来</div>
<div class="t" style="left:159px;top:1035px">体验一下&#xFF0C;相当于免费的足部体检。</div>

<div class="t" style="left:476px;top:950px">话术&#xFF1A;我们这边有凳子&#xFF0C;您可以坐下脱</div>
<div class="t" style="left:476px;top:971px">下鞋子&#xFF0C;站上去测量&#xFF0C;双脚放在虚线框</div>
<div class="t" style="left:476px;top:993px">里就行。</div>

<div class="t" style="left:818px;top:951px">话术&#xFF1A;您可以目视前方&#xFF0C;腿部和双脚放</div>
<div class="t" style="left:818px;top:972px">松&#xFF0C;不要动&#xFF0C;坚持2秒即可。</div>

<div class="t" style="left:1141px;top:950px">话术&#xFF1A;已经好了&#xFF0C;您可以看一下您的脚型&#xFF0C;脚</div>
<div class="t" style="left:1141px;top:971px">长&#xFF0C;脚宽&#xFF0C;以后可以根据您最长的一只脚的数</div>
<div class="t" style="left:1141px;top:992px">据去选鞋&#xFF0C;以免挤脚&#xFF0C;您还可以查看您的脚型</div>
<div class="t" style="left:1141px;top:1014px">问题&#xFF0C;留下您的姓名和联系方式就可以直接产</div>
<div class="t" style="left:1141px;top:1035px">看最全面的脚型报告&#xFF0C;手淘扫一扫就可以把数</div>
<div class="t" style="left:1141px;top:1056px">据带走咯~</div>

<div class="t" style="left:1478px;top:949px">话术&#xFF1A;您的脚型属于XX型&#xFF0C;XX鞋型穿起来</div>
<div class="t" style="left:1478px;top:970px">会更舒适&#xFF0C;手淘里面也为您推荐了适合你</div>
<div class="t" style="left:1478px;top:991px">脚型的鞋子,您可以点开看一下哦~</div>
<div class="t" style="left:1478px;top:1028px">话术&#xFF1A;您的脚型比较特殊&#xFF0C;有严重的扁平</div>
<div class="t" style="left:1478px;top:1049px">足/足外翻&#xFF0C;根据您的脚型我们这边有定制</div>
<div class="t" style="left:1478px;top:1070px">鞋/定制鞋垫&#xFF0C;可以为您进行一对一定制服</div>
<div class="t" style="left:1478px;top:1091px">务&#xFF0C;帮助改善您的足部问题&#xFF0C;走起路来会</div>
<div class="t" style="left:1478px;top:1112px">更加舒适&#xFF0C;不容易脚疼。</div>

<!-- row 5 -->
<div class="t" style="left:1141px;top:1196px">扫描二维码取得报告</div>
<div class="t" style="left:1477px;top:1196px">千人千面推荐合适的鞋子</div>

<div style="position:absolute;left:1482px;top:1293px;font-size:26px;line-height:34px;color:#77777b;white-space:nowrap">Designed by <b style="color:#808084">Alibaba Design</b></div>
</body></html>
